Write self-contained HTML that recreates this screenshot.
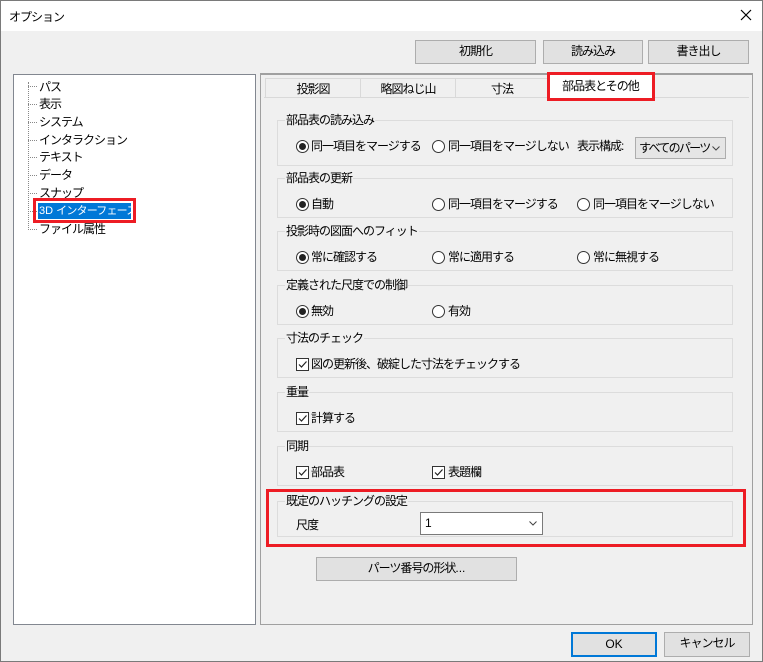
<!DOCTYPE html><html><head><meta charset="utf-8"><style>
*{margin:0;padding:0;box-sizing:border-box}
body{width:763px;height:662px;background:#f0f0f0;font-family:"Liberation Sans","Noto Sans CJK JP",sans-serif;font-size:12px;letter-spacing:-1px;color:#000;position:relative;overflow:hidden}
.a{position:absolute;white-space:nowrap}
.win{position:absolute;left:0;top:0;width:763px;height:662px;border:1px solid #7a7a7a}
.btn{position:absolute;background:#e1e1e1;border:1px solid #adadad;text-align:center;line-height:21px}
.grp{position:absolute;left:277px;width:456px;border:1px solid #dcdcdc}
.gt{position:absolute;left:7px;top:-9px;background:#f0f0f0;padding:0 1px;line-height:16px}
.r{position:absolute;width:13px;height:13px;border:1px solid #333;border-radius:50%;background:#fff}
.r.on::after{content:"";position:absolute;left:2px;top:2px;width:7px;height:7px;border-radius:50%;background:#222}
.c{position:absolute;width:13px;height:13px;border:1px solid #333;background:#fff}
.c svg{position:absolute;left:0;top:0}
.lab{position:absolute;line-height:14px;white-space:nowrap}
.red{position:absolute;border:3px solid #ed1c24}
.chev{position:absolute;right:5px;top:8px}
.n{letter-spacing:0}
</style></head><body>
<div class="win"></div>
<div class="a" style="left:1px;top:1px;width:761px;height:30px;background:#fff"></div>
<div class="a" style="left:9px;top:8px">オプション</div>
<svg class="a" style="left:740px;top:9px" width="12" height="12"><path d="M1 1L11 11M11 1L1 11" stroke="#000" stroke-width="1.2"/></svg>
<div class="btn" style="left:415px;top:40px;width:121px;height:24px">初期化</div>
<div class="btn" style="left:543px;top:40px;width:100px;height:24px">読み込み</div>
<div class="btn" style="left:648px;top:40px;width:101px;height:24px">書き出し</div>
<div class="a" style="left:13px;top:74px;width:243px;height:551px;background:#fff;border:1px solid #828790"></div>
<div class="a" style="left:28px;top:82px;height:148px;border-left:1px dotted #888"></div>
<div class="a" style="left:28px;top:86px;width:9px;border-top:1px dotted #888"></div>
<div class="a" style="left:28px;top:104px;width:9px;border-top:1px dotted #888"></div>
<div class="a" style="left:28px;top:122px;width:9px;border-top:1px dotted #888"></div>
<div class="a" style="left:28px;top:140px;width:9px;border-top:1px dotted #888"></div>
<div class="a" style="left:28px;top:157px;width:9px;border-top:1px dotted #888"></div>
<div class="a" style="left:28px;top:175px;width:9px;border-top:1px dotted #888"></div>
<div class="a" style="left:28px;top:193px;width:9px;border-top:1px dotted #888"></div>
<div class="a" style="left:28px;top:211px;width:9px;border-top:1px dotted #888"></div>
<div class="a" style="left:28px;top:229px;width:9px;border-top:1px dotted #888"></div>
<div class="a" style="left:39px;top:78px">パス</div>
<div class="a" style="left:39px;top:95px">表示</div>
<div class="a" style="left:39px;top:113px">システム</div>
<div class="a" style="left:39px;top:131px">インタラクション</div>
<div class="a" style="left:39px;top:148px">テキスト</div>
<div class="a" style="left:39px;top:166px">データ</div>
<div class="a" style="left:39px;top:184px">スナップ</div>
<div class="a" style="left:38px;top:203px;width:93px;height:16px;background:#0078d7;color:#fff;padding-left:1px;line-height:16px;overflow:hidden;font-size:11px;letter-spacing:-0.8px"><span class="n">3D </span>インターフェース</div>
<div class="red" style="left:33px;top:198px;width:103px;height:25px"></div>
<div class="a" style="left:39px;top:220px">ファイル属性</div>
<div class="a" style="left:260px;top:73px;width:493px;height:552px;border:1px solid #a0a0a0;border-top:2px solid #a0a0a0"></div>
<div class="a" style="left:264px;top:78px;width:485px;height:20px;border-bottom:1px solid #d9d9d9"></div>
<div class="a" style="left:265px;top:78px;width:96px;height:20px;border:1px solid #d9d9d9;border-bottom:none;text-align:center;line-height:20px">投影図</div>
<div class="a" style="left:360px;top:78px;width:96px;height:20px;border:1px solid #d9d9d9;border-bottom:none;text-align:center;line-height:20px">略図ねじ山</div>
<div class="a" style="left:455px;top:78px;width:94px;height:20px;border:1px solid #d9d9d9;border-bottom:none;text-align:center;line-height:20px">寸法</div>
<div class="a" style="left:548px;top:74px;width:105px;height:25px;background:#fff;text-align:center;line-height:25px">部品表とその他</div>
<div class="red" style="left:547px;top:72px;width:108px;height:29px"></div>
<div class="grp" style="top:120px;height:46px"><div class="gt">部品表の読み込み</div></div>
<div class="r on" style="left:296px;top:140px"></div><div class="lab" style="left:311px;top:139px">同一項目をマージする</div>
<div class="r" style="left:432px;top:140px"></div><div class="lab" style="left:448px;top:139px">同一項目をマージしない</div>
<div class="lab" style="left:577px;top:139px">表示構成:</div>
<div class="a" style="left:635px;top:137px;width:91px;height:22px;background:#e5e5e5;border:1px solid #adadad;line-height:20px;padding-left:3px;overflow:hidden;letter-spacing:-1.7px">すべてのパーツ<svg class="chev" width="8" height="5"><path d="M0.5 0.5L4 4L7.5 0.5" stroke="#444" fill="none"/></svg></div>
<div class="grp" style="top:178px;height:40px"><div class="gt">部品表の更新</div></div>
<div class="r on" style="left:296px;top:198px"></div><div class="lab" style="left:311px;top:197px">自動</div>
<div class="r" style="left:432px;top:198px"></div><div class="lab" style="left:448px;top:197px">同一項目をマージする</div>
<div class="r" style="left:577px;top:198px"></div><div class="lab" style="left:593px;top:197px">同一項目をマージしない</div>
<div class="grp" style="top:231px;height:40px"><div class="gt">投影時の図面へのフィット</div></div>
<div class="r on" style="left:296px;top:251px"></div><div class="lab" style="left:311px;top:250px">常に確認する</div>
<div class="r" style="left:432px;top:251px"></div><div class="lab" style="left:448px;top:250px">常に適用する</div>
<div class="r" style="left:577px;top:251px"></div><div class="lab" style="left:593px;top:250px">常に無視する</div>
<div class="grp" style="top:285px;height:40px"><div class="gt">定義された尺度での制御</div></div>
<div class="r on" style="left:296px;top:305px"></div><div class="lab" style="left:311px;top:304px">無効</div>
<div class="r" style="left:432px;top:305px"></div><div class="lab" style="left:448px;top:304px">有効</div>
<div class="grp" style="top:338px;height:40px"><div class="gt">寸法のチェック</div></div>
<div class="c" style="left:296px;top:358px"><svg width="11" height="11"><path d="M2 5.5L4.5 8L9.5 2.5" stroke="#222" fill="none" stroke-width="1.2"/></svg></div><div class="lab" style="left:311px;top:357px">図の更新後、破綻した寸法をチェックする</div>
<div class="grp" style="top:392px;height:40px"><div class="gt">重量</div></div>
<div class="c" style="left:296px;top:412px"><svg width="11" height="11"><path d="M2 5.5L4.5 8L9.5 2.5" stroke="#222" fill="none" stroke-width="1.2"/></svg></div><div class="lab" style="left:311px;top:411px">計算する</div>
<div class="grp" style="top:446px;height:40px"><div class="gt">同期</div></div>
<div class="c" style="left:296px;top:466px"><svg width="11" height="11"><path d="M2 5.5L4.5 8L9.5 2.5" stroke="#222" fill="none" stroke-width="1.2"/></svg></div><div class="lab" style="left:311px;top:465px">部品表</div>
<div class="c" style="left:432px;top:466px"><svg width="11" height="11"><path d="M2 5.5L4.5 8L9.5 2.5" stroke="#222" fill="none" stroke-width="1.2"/></svg></div><div class="lab" style="left:448px;top:465px">表題欄</div>
<div class="grp" style="top:501px;height:36px"><div class="gt">既定のハッチングの設定</div></div>
<div class="lab" style="left:296px;top:518px">尺度</div>
<div class="a" style="left:420px;top:512px;width:123px;height:23px;background:#fff;border:1px solid #7a7a7a;line-height:21px;padding-left:4px">1<svg class="chev" width="8" height="5"><path d="M0.5 0.5L4 4L7.5 0.5" stroke="#444" fill="none"/></svg></div>
<div class="red" style="left:266px;top:489px;width:480px;height:58px"></div>
<div class="btn" style="left:316px;top:557px;width:201px;height:24px">パーツ番号の形状<span class="n">...</span></div>
<div class="btn n" style="left:571px;top:632px;width:86px;height:25px;border:2px solid #0078d7;line-height:21px">OK</div>
<div class="btn" style="left:664px;top:632px;width:86px;height:25px">キャンセル</div>
</body></html>
